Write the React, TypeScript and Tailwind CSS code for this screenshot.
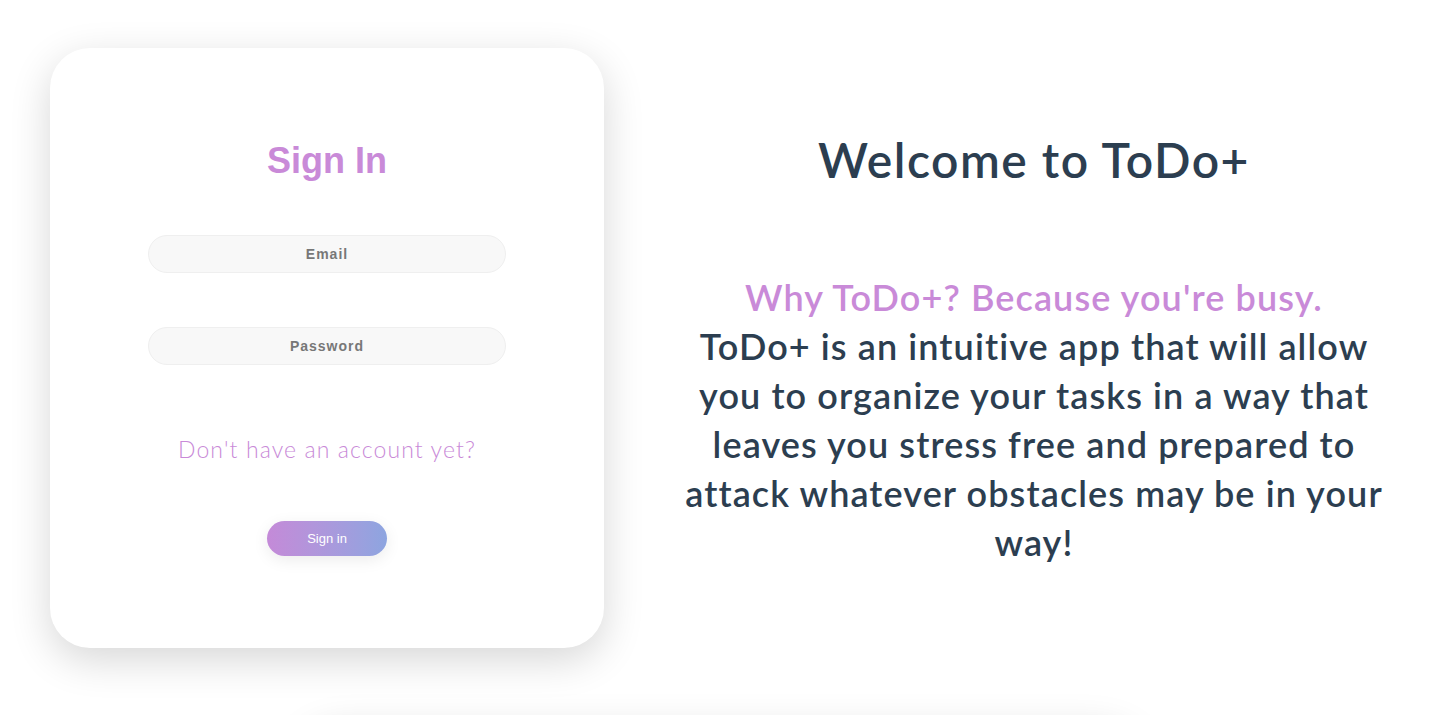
import React from 'react';

const avenir = { fontFamily: 'Lato, "Noto Sans", sans-serif' };

const App = () => {
  return (
    <div className="min-h-screen bg-white overflow-hidden" style={avenir}>
      <div className="flex items-start pt-12 pl-[50px]">
        {/* Sign in card */}
        <div className="w-[554px] h-[600px] shrink-0 rounded-[40px] bg-white shadow-[0_12px_40px_rgba(0,0,0,0.16)] flex flex-col items-center pt-[92px]">
          <h2 className="text-[36px] leading-[42px] font-bold text-[#c98ad8] font-['Liberation_Sans',Arial,sans-serif]">
            Sign In
          </h2>
          <input
            type="email"
            placeholder="Email"
            className="mt-[53px] w-[358px] h-[38px] rounded-full bg-[#f8f8f8] border border-[#efefef] text-center text-[14px] font-bold tracking-[1px] text-[#666] placeholder:text-[#777] outline-none font-['Liberation_Sans',Arial,sans-serif]"
          />
          <input
            type="password"
            placeholder="Password"
            className="mt-[54px] w-[358px] h-[38px] rounded-full bg-[#f8f8f8] border border-[#efefef] text-center text-[14px] font-bold tracking-[1px] text-[#666] placeholder:text-[#777] outline-none font-['Liberation_Sans',Arial,sans-serif]"
          />
          <p className="mt-[70px] text-[23px] leading-[28px] font-light tracking-[1.1px] text-[#c98ad8]">
            Don't have an account yet?
          </p>
          <button className="mt-[58px] w-[120px] h-[35px] rounded-full bg-gradient-to-r from-[#c48ad8] to-[#8da5e0] text-white text-[13px] shadow-[0_4px_16px_rgba(0,0,0,0.08)] font-['Liberation_Sans',Arial,sans-serif]">
            Sign in
          </button>
        </div>

        {/* Welcome text */}
        <div className="ml-[50px] w-[760px] flex flex-col items-center text-center text-[#2c3e50] pt-[83px]">
          <h1 className="text-[48px] leading-[58px] font-semibold tracking-[1.5px]">Welcome to ToDo+</h1>
          <div className="mt-[84px] w-[720px] text-[36px] leading-[49px] font-semibold tracking-[1.1px]">
            <p className="text-[#c98ad8]">Why ToDo+? Because you're busy.</p>
            <p>
              ToDo+ is an intuitive app that will allow you to organize your tasks in a way that leaves
              you stress free and prepared to attack whatever obstacles may be in your way!
            </p>
          </div>
        </div>
      </div>

      {/* Next section, below the fold */}
      <div className="mx-auto mt-[72px] w-[840px] h-[300px] rounded-[40px] bg-white shadow-[0_12px_40px_rgba(0,0,0,0.16)]" />
    </div>
  );
};

export default App;
